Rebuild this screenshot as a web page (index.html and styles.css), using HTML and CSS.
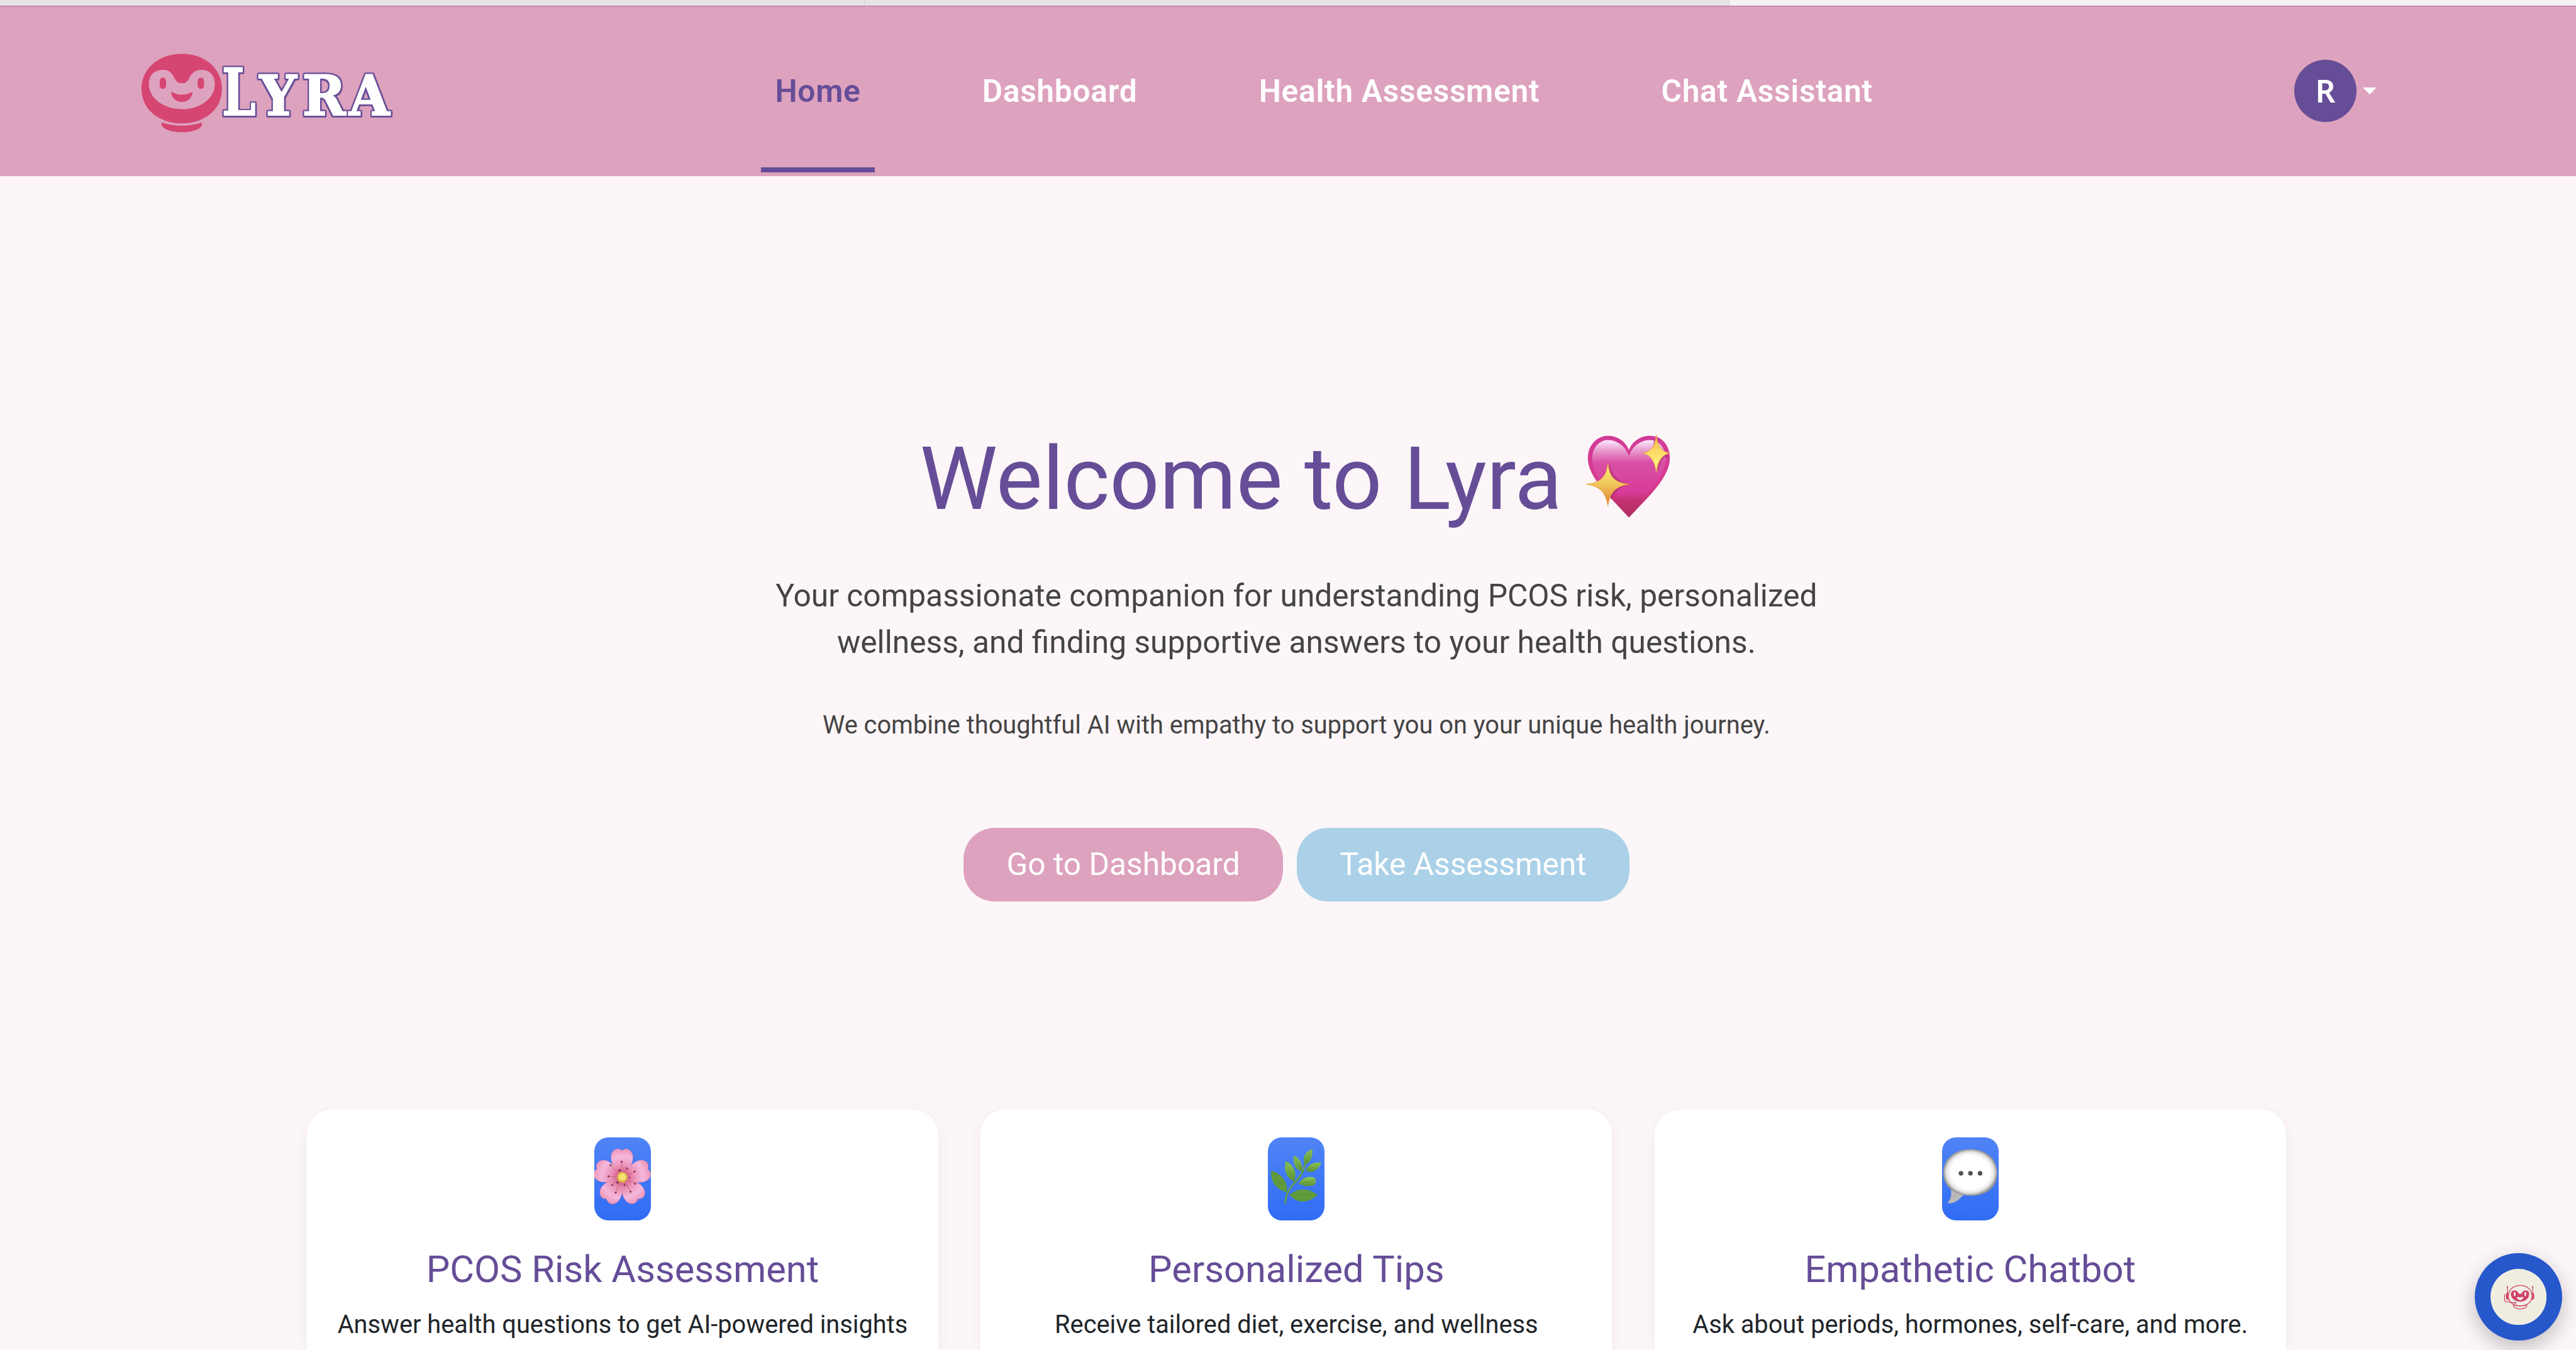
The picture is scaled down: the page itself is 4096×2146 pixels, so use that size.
FILE: index.html
```html
<!DOCTYPE html>
<html lang="en">
<head>
<meta charset="utf-8">
<title>Lyra</title>
<link rel="stylesheet" href="styles.css">
</head>
<body>
<div class="tabstrip"><span class="tab"></span><span class="tab"></span><span class="tab tab-active"></span></div>
<header class="header">
  <a class="logo">
    <svg class="logo-art" viewBox="74 65 1300 415" role="img" aria-label="Lyra">
      <g fill="#d64672">
        <path fill-rule="evenodd" d="M283 70C400 70 491 145 491 250C491 360 400 431 283 431C166 431 74 360 74 250C74 145 166 70 283 70ZM185 153C140 153 112 180 112 226C112 300 190 357 283 357C380 357 454 300 454 226C454 180 425 153 385 153C350 153 333 173 321 196C309 219 300 222 283 222C266 222 257 219 245 196C233 173 222 153 185 153Z"/>
        <rect x="168" y="194" width="33" height="58" rx="16.500"/>
        <rect x="365" y="194" width="33" height="58" rx="16.500"/>
        <path d="M227 266Q283 297 339 266C337 299 314 319 283 319C252 319 230 299 227 266Z"/>
        <path d="M178 426Q283 459 387 426V438C380 462 335 476 283 476C231 476 186 462 178 438Z"/>
      </g>
      <g class="wordmark">
        <text transform="translate(491 388) scale(.74 1)" font-size="336">L</text>
        <text transform="translate(0 388) scale(.94 1)" font-size="288" x="729 966 1223">YRA</text>
      </g>
    </svg>
  </a>
  <nav class="nav">
    <a class="nav-link active">Home</a>
    <a class="nav-link">Dashboard</a>
    <a class="nav-link">Health Assessment</a>
    <a class="nav-link">Chat Assistant</a>
  </nav>
  <div class="account"><span class="avatar">R</span><span class="caret"></span></div>
</header>
<main class="main">
  <section class="hero">
    <h1>Welcome to Lyra <svg class="heart" viewBox="118 88 438 436" aria-hidden="true">
      <defs>
        <linearGradient id="hrim" x1="0" y1="0" x2="0" y2="1"><stop offset="0" stop-color="#d13b97"/><stop offset=".6" stop-color="#d83a8e"/><stop offset="1" stop-color="#ad2e60"/></linearGradient>
        <linearGradient id="hfill" x1="0" y1="0" x2="0" y2="1"><stop offset="0" stop-color="#fdeaff"/><stop offset=".13" stop-color="#e99fd0"/><stop offset=".3" stop-color="#d950a6"/><stop offset=".7" stop-color="#d83a98"/><stop offset=".8" stop-color="#c23170"/><stop offset="1" stop-color="#b42e62"/></linearGradient>
        <linearGradient id="gold" x1="0" y1="0" x2="0" y2="1"><stop offset="0" stop-color="#f0b845"/><stop offset=".4" stop-color="#fff07a"/><stop offset=".65" stop-color="#f3cf5f"/><stop offset="1" stop-color="#dd8136"/></linearGradient>
      </defs>
      <path fill="url(#hrim)" d="M340 521L245 420C180 350 127 280 127 212C127 145 175 97 231 97C285 97 325 130 340 172C355 130 395 97 449 97C510 97 552 145 552 212C552 280 500 350 440 415Z"/>
      <path fill="url(#hfill)" d="M340 510L255 415C200 350 149 285 149 215C149 160 186 119 231 119C282 119 325 155 340 202C355 155 398 119 449 119C494 119 531 160 531 215C531 280 490 340 425 410Z"/>
      <path fill="#a52a67" opacity=".55" d="M240 240C250 300 275 330 345 348C290 360 265 390 250 425L225 400ZM470 115C480 150 500 180 548 205C510 210 500 235 492 275L460 190Z"/>
      <path fill="url(#gold)" stroke="#e5a246" stroke-width="3" d="M231 238C238 310 265 340 340 348C270 358 242 390 231 460C219 390 190 358 119 348C195 340 223 310 231 238ZM482 91C488 150 505 178 553 187C508 195 490 230 482 287C473 230 455 195 409 187C458 178 476 150 482 91Z"/>
    </svg></h1>
    <p class="lead">Your compassionate companion for understanding PCOS risk, personalized<br>wellness, and finding supportive answers to your health questions.</p>
    <p class="note">We combine thoughtful AI with empathy to support you on your unique health journey.</p>
    <div class="actions"><a class="button pink">Go to Dashboard</a><a class="button blue">Take Assessment</a></div>
  </section>
  <section class="cards">
    <article class="card">
      <div class="icon">
        <svg viewBox="81 69 294 432" aria-hidden="true">
          <defs>
            <radialGradient id="petal" gradientUnits="userSpaceOnUse" cx="226" cy="276" r="150"><stop offset=".15" stop-color="#d75f8e"/><stop offset=".4" stop-color="#eb8fb5"/><stop offset=".72" stop-color="#f4b8dc"/><stop offset="1" stop-color="#ee94b4"/></radialGradient>
            <path id="p" d="M226 280C205 250 168 215 168 170C168 140 195 115 224 138C250 115 281 140 281 172C281 215 247 250 226 280Z"/>
          </defs>
          <g fill="url(#petal)" stroke="#dc7fa6" stroke-width="1.500">
            <use href="#p" transform="rotate(145 226 276)"/><use href="#p" transform="rotate(217 226 276)"/><use href="#p" transform="rotate(-71 226 276)"/><use href="#p" transform="rotate(73 226 276)"/><use href="#p"/>
          </g>
          <g stroke="#bd6b68" stroke-width="3"><path d="M226 276L223 195M226 276L165 213M226 276L250 230M226 276L290 246M226 276L154 271M226 276L173 316M226 276L192 355M226 276L269 350M226 276L293 309M226 276L238 316M226 276L212 240M226 276L265 278"/></g>
          <g fill="#85304f"><circle cx="223" cy="195" r="5"/><circle cx="165" cy="213" r="5"/><circle cx="250" cy="230" r="5"/><circle cx="290" cy="246" r="5"/><circle cx="154" cy="271" r="5"/><circle cx="173" cy="316" r="5"/><circle cx="192" cy="355" r="5"/><circle cx="269" cy="350" r="5"/><circle cx="293" cy="309" r="5"/><circle cx="238" cy="316" r="5"/><circle cx="212" cy="240" r="6"/><circle cx="265" cy="278" r="4"/><circle cx="201" cy="303" r="6"/></g>
          <circle cx="226" cy="276" r="28" fill="#e3b748"/><circle cx="226" cy="274" r="20" fill="#f5df6c"/>
          <circle cx="226" cy="276" r="24" fill="none" stroke="#b88a3a" stroke-width="8" stroke-dasharray="2 9"/>
        </svg>
      </div>
      <h2>PCOS Risk Assessment</h2>
      <p>Answer health questions to get AI-powered insights</p>
    </article>
    <article class="card">
      <div class="icon">
        <svg viewBox="78 69 294 432" aria-hidden="true">
          <defs><linearGradient id="leaf" x1="0" y1="0" x2="0" y2="1"><stop offset="0" stop-color="#8ec655"/><stop offset="1" stop-color="#5b9138"/></linearGradient></defs>
          <path d="M168 409C173 340 215 310 238 280C256 256 266 235 271 205" fill="none" stroke="#558d3b" stroke-width="9" stroke-linecap="round"/>
          <path d="M168 405C173 340 215 308 237 278C255 254 265 235 270 205" fill="none" stroke="#79b552" stroke-width="4"/>
          <g fill="url(#leaf)">
            <path d="M308 129C270 145 253 175 270 210C300 200 312 170 308 129Z"/>
            <path d="M212 163C208 205 220 240 256 245C260 205 245 180 212 163Z"/>
            <path d="M355 199C315 197 285 210 275 243C305 258 340 240 355 199Z"/>
            <path d="M171 192C158 240 175 280 215 299C230 250 215 215 171 192Z"/>
            <path d="M238 309C255 280 285 268 315 276C332 285 331 305 315 317C290 327 260 320 238 309Z"/>
          </g>
          <g fill="#609b3c">
            <path d="M96 241C90 295 115 335 176 354C185 300 150 260 96 241Z"/>
            <path d="M190 368C225 333 285 325 335 368C290 410 230 415 190 368Z"/>
          </g>
          <g fill="none" stroke="#4c8234" stroke-width="2" opacity=".6"><path d="M96 241L176 354M130 289L128 320M143 307L168 303M190 368L335 368M230 367L245 347M265 368L280 390M171 192L215 299M212 163L256 245M308 129L270 210M355 199L275 243M315 292L238 309M178 360L171 351M238 309L228 310"/></g>
        </svg>
      </div>
      <h2>Personalized Tips</h2>
      <p>Receive tailored diet, exercise, and wellness</p>
    </article>
    <article class="card">
      <div class="icon">
        <svg viewBox="75 69 294 432" aria-hidden="true">
          <defs><radialGradient id="bub"><stop offset=".72" stop-color="#fff"/><stop offset=".88" stop-color="#e4e4e4"/><stop offset="1" stop-color="#929292"/></radialGradient></defs>
          <path d="M120 335C127 370 118 392 103 409C135 417 160 395 188 366Z" fill="#b9b9b9"/>
          <path d="M220 130C305 130 361 180 361 255C361 330 305 371 225 371C140 371 81 325 81 252C81 180 140 130 220 130Z" fill="url(#bub)"/>
          <g fill="#505050"><circle cx="173" cy="255" r="12"/><circle cx="222" cy="255" r="12"/><circle cx="272" cy="255" r="12"/></g>
        </svg>
      </div>
      <h2>Empathetic Chatbot</h2>
      <p>Ask about periods, hormones, self-care, and more.</p>
    </article>
  </section>
</main>
<a class="chat" aria-label="Open chat">
  <svg viewBox="186 185 291 291">
    <circle cx="331.500" cy="330.500" r="145.500" fill="#f0eee1"/>
    <g fill="none" stroke="#d0446c" stroke-width="4">
      <path d="M340 271C378 271 401 295 401 326C401 357 375 377 340 377C305 377 279 357 279 326C279 295 302 271 340 271Z"/>
      <path d="M305 371Q340 383 374 371V378C370 388 356 392 340 392C324 392 310 388 306 378ZM259 316V346Q260 355 270 355L310 361M274 280V308M405 280V308"/>
    </g>
    <g fill="#d0446c">
      <path d="M312 297C330 297 328 315 340 315C352 315 350 297 368 297C383 297 388 308 386 322C382 343 362 355 340 355C317 355 297 343 292 322C290 308 297 297 312 297Z"/>
      <path d="M280 307C268 308 266 314 266 327S268 346 280 346C276 332 276 320 280 307ZM400 307C411 308 413 314 413 327S411 346 400 346C404 332 404 320 400 307Z"/>
      <circle cx="274" cy="279" r="4"/><circle cx="405" cy="279" r="4"/><ellipse cx="313" cy="361" rx="7" ry="4"/>
    </g>
    <g fill="#f0eee1"><rect x="307" y="306" width="9" height="19" rx="4"/><rect x="362" y="306" width="9" height="19" rx="4"/><path d="M322 329Q340 336 357 329C354 342 348 347 340 347S325 342 322 329Z"/></g>
  </svg>
</a>
</body>
</html>
```
FILE: styles.css
```css
html {
  font-size: 2.247191vw;
}

* {
  box-sizing: border-box;
}

body {
  margin: 0;
  height: 100vh;
  overflow: hidden;
  display: flex;
  flex-direction: column;
  background: #fcf6f8;
  color: #212529;
  font-family: Roboto, sans-serif;
  font-size: .432rem;
}

.tabstrip {
  display: flex;
  flex: none;
  height: .1rem;
  background: #e5e5e5;
}

.tab {
  width: 14.94rem;
  border-right: .02rem solid #d2d2d2;
}

.tab-active {
  flex: 1;
  border: 0;
  background: #f3f3f3;
}

.header {
  flex: none;
  display: flex;
  align-items: center;
  height: 2.94rem;
  padding: 0 3.44rem 0 2.447rem;
  background: #dda2be;
  box-shadow: inset 0 .01rem #b77c9a, inset 0 .02rem #cf94b1;
}

.logo {
  display: block;
  width: 4.333rem;
  margin-top: .076rem;
}

.logo-art {
  display: block;
  width: 4.333rem;
  height: 1.383rem;
  overflow: visible;
}

.wordmark {
  fill: #fff;
  stroke: #fff;
  stroke-width: 7px;
  font-family: "DejaVu Serif", serif;
  font-weight: 700;
  filter: drop-shadow(-6px 0 0 #664d97) drop-shadow(7px 0 0 #664d97) drop-shadow(0 -6px 0 #664d97) drop-shadow(0 9px 0 #664d97);
}

.nav {
  display: flex;
  align-self: stretch;
  gap: 1.62rem;
  margin-left: 6.37rem;
}

.nav-link {
  display: flex;
  align-items: center;
  margin-bottom: .06rem;
  padding: .15rem .24rem 0;
  border-bottom: .09rem solid transparent;
  color: #fff;
  font-size: .54rem;
  font-weight: 600;
  letter-spacing: .014em;
  white-space: nowrap;
}

.active {
  color: #664d97;
  border-color: #664d97;
}

.account {
  display: flex;
  align-items: center;
  gap: .11rem;
  margin-left: auto;
}

.avatar {
  display: grid;
  place-items: center;
  width: 1.08rem;
  height: 1.08rem;
  border-radius: 50%;
  background: #664d97;
  color: #fff;
  font: 600 .54rem/1 "Noto Sans", sans-serif;
}

.caret {
  border: .12rem solid transparent;
  border-top-color: #fff;
  border-bottom: 0;
}

.main {
  flex: 1;
  display: flex;
  flex-direction: column;
  padding-left: .29rem;
}

.hero {
  flex: none;
  height: 16.12rem;
  padding-top: 4.335rem;
  text-align: center;
}

h1, h2, p {
  margin: 0;
  font-weight: 400;
}

h1 {
  color: #664d97;
  font-size: 1.512rem;
  line-height: 1.81rem;
  white-space: nowrap;
}

.heart {
  width: 1.46rem;
  height: 1.453rem;
  margin: 0 .04rem -.16rem;
  vertical-align: baseline;
}

.lead {
  margin-top: .7rem;
  color: #444;
  font-size: .54rem;
  line-height: .81rem;
}

.note {
  margin-top: .7rem;
  color: #444;
  line-height: .65rem;
}

.actions {
  display: flex;
  justify-content: center;
  gap: .24rem;
  margin-top: 1.44rem;
}

.button {
  display: flex;
  align-items: center;
  justify-content: center;
  width: 5.52rem;
  height: 1.27rem;
  border-radius: .54rem;
  color: #fff;
  font-size: .54rem;
}

.pink {
  background: #dda2be;
}

.blue {
  width: 5.74rem;
  background: #abd1e8;
}

.cards {
  flex: 1;
  display: grid;
  grid-template-columns: repeat(3, 10.91rem);
  justify-content: center;
  gap: .73rem;
}

.card {
  display: flex;
  flex-direction: column;
  align-items: center;
  padding-top: .48rem;
  border-radius: .43rem .43rem 0 0;
  background: #fff;
  box-shadow: 0 .05rem .27rem rgba(0, 0, 0, .05);
  white-space: nowrap;
}

.icon {
  width: .98rem;
  height: 1.44rem;
  border-radius: .24rem;
  background: linear-gradient(#5084f6, #306cf5);
  overflow: hidden;
}

.icon svg {
  display: block;
  width: 100%;
  height: 100%;
}

h2 {
  margin-top: .46rem;
  color: #664d97;
  font-size: .648rem;
  line-height: .78rem;
}

.card p {
  margin-top: .23rem;
  line-height: .65rem;
}

.chat {
  position: absolute;
  right: .24rem;
  bottom: .16rem;
  display: grid;
  place-items: center;
  width: 1.51rem;
  height: 1.51rem;
  border-radius: 50%;
  background: #2657cb;
  box-shadow: 0 .12rem .36rem rgba(0, 0, 0, .24);
}

.chat svg {
  width: .97rem;
  height: .97rem;
}
```
